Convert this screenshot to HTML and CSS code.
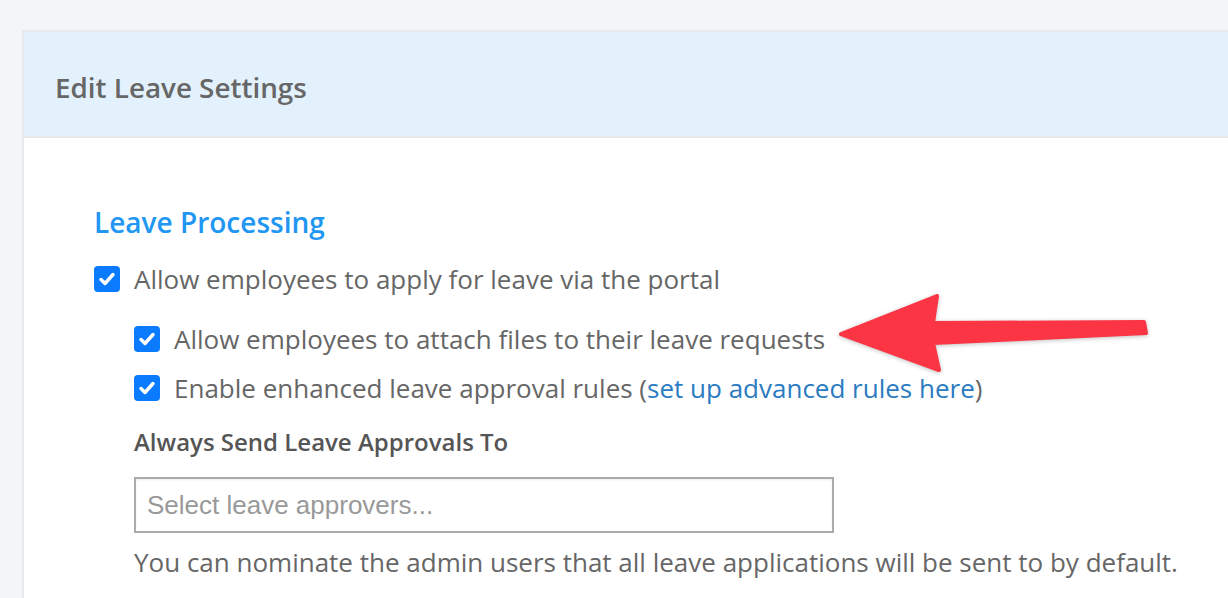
FILE: index.html
```html
<!DOCTYPE html>
<html>
<head>
	<meta charset='utf-8'/>
	<title>Edit Leave Settings</title>
	<link rel="stylesheet" href="styles.css">
</head>
<body>

	<div class="card">
		<div class="card-header">
			<h1>Edit Leave Settings</h1>
		</div>

		<div class="card-body">
			<h2>Leave Processing</h2>

			<div class="check-row">
				<span class="check"><svg viewBox="0 0 26 26"><path d="M7 13.5l4 4 8-9" /></svg></span>
				<span>Allow employees to apply for leave via the portal</span>
			</div>

			<div class="sub-options">
				<div class="check-row row-attach">
					<span class="check"><svg viewBox="0 0 26 26"><path d="M7 13.5l4 4 8-9" /></svg></span>
					<span>Allow employees to attach files to their leave requests</span>
				</div>
				<div class="check-row row-rules">
					<span class="check"><svg viewBox="0 0 26 26"><path d="M7 13.5l4 4 8-9" /></svg></span>
					<span>Enable enhanced leave approval rules (<a href="#">set up advanced rules here</a>)</span>
				</div>

				<label class="field-label">Always Send Leave Approvals To</label>
				<div class="select-box">Select leave approvers...</div>
				<p class="help">You can nominate the admin users that all leave applications will be sent to by default.</p>
			</div>
		</div>
	</div>

	<svg class="arrow" viewBox="0 0 330 95">
		<polygon points="11,49 107,11 103,38 314,37 316,48 103,58 109,85" />
	</svg>

</body>
</html>
```

FILE: styles.css
```css
*{
	margin:0;padding:0;
	box-sizing:border-box;
}
body{
	background:#f4f5f9;
	font-family:"Open Sans","Noto Sans",sans-serif;
	color:#666;
	height:100vh;
	overflow:hidden;
}

.card{
	margin:30px 0 0 22px;
	border:2px solid #e6e8ec;
	border-right:none;
	border-bottom:none;
	background:#fff;
	height:calc(100vh - 30px);
	overflow:hidden;
}
.card-header{
	height:106px;
	background:#e3f1fc;
	border-bottom:2px solid #e6e8ec;
	display:flex;
	align-items:center;
	padding:6px 0 0 31px;
}
.card-header h1{
	font-size:27.8px;
	font-weight:600;
	color:#666;
}

.card-body{
	padding:64px 0 0 70px;
}
.card-body h2{
	font-size:28px;
	font-weight:600;
	line-height:40px;
	color:#2196f3;
	margin-bottom:19px;
}

.check-row{
	display:flex;
	align-items:center;
	gap:14px;
	font-size:26px;
	line-height:36px;
}
.check{
	width:26px;
	height:26px;
	border-radius:4px;
	background:#0a7bff;
	flex:none;
}
.check svg{
	display:block;
	width:26px;
	height:26px;
}
.check path{
	fill:none;
	stroke:#fff;
	stroke-width:3.4;
	stroke-linecap:round;
	stroke-linejoin:round;
}

.sub-options{
	padding-left:40px;
}
.row-attach{
	margin-top:24px;
}
.row-rules{
	margin-top:13px;
}
.check-row a{
	color:#2a7bc1;
	text-decoration:none;
}

.field-label{
	display:block;
	margin-top:21px;
	font-size:24px;
	font-weight:600;
	line-height:30px;
	color:#555;
}
.select-box{
	margin-top:20px;
	width:700px;
	height:56px;
	border:2px solid #aaa;
	box-shadow:inset 0 1px 2px rgba(0,0,0,0.08);
	display:flex;
	align-items:center;
	padding-left:11px;
	font-family:"Liberation Sans",Arial,sans-serif;
	font-size:26px;
	color:#999;
}
.help{
	margin-top:11px;
	font-size:26px;
	line-height:36px;
	color:#666;
}

.arrow{
	position:absolute;
	left:830px;
	top:285px;
	width:330px;
	height:95px;
	filter:drop-shadow(0 1px 2px rgba(0,0,0,0.25));
}
.arrow polygon{
	fill:#fc3545;
	stroke:#fc3545;
	stroke-width:4;
	stroke-linejoin:round;
}
```
